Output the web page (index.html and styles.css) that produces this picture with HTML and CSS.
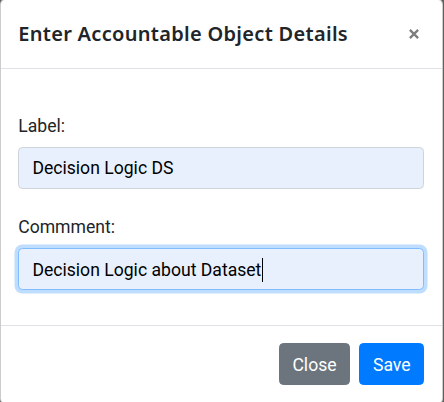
FILE: index.html
```html
<!DOCTYPE html>
<html lang="en">
<head>
<meta charset="utf-8">
<title>Enter Accountable Object Details</title>
<link rel="stylesheet" href="styles.css">
</head>
<body>
<div class="modal">
  <div class="modal-header">
    <h5 class="modal-title">Enter Accountable Object Details</h5>
    <button class="close" type="button" aria-label="Close">
      <svg width="10" height="10" viewBox="0 0 10 10" aria-hidden="true"><path d="M0.9 0.9L9.1 9.1M9.1 0.9L0.9 9.1" stroke="#7d7d7d" stroke-width="2.3"/></svg>
    </button>
  </div>
  <div class="modal-body">
    <div class="form-group">
      <label class="form-label">Label:</label>
      <div class="field">Decision Logic DS</div>
    </div>
    <div class="form-group">
      <label class="form-label">Commment:</label>
      <div class="field focused">Decision Logic about Dataset<span class="caret"></span></div>
    </div>
  </div>
  <div class="modal-footer">
    <button class="btn btn-secondary" type="button">Close</button>
    <button class="btn btn-primary" type="button">Save</button>
  </div>
</div>
</body>
</html>
```

FILE: styles.css
```css
html, body {
  margin: 0;
  padding: 0;
}
body {
  background: #5e625f;
  width: 444px;
  height: 402px;
  overflow: hidden;
  font-family: "Segoe UI", Roboto, "Noto Sans", sans-serif;
  color: #212529;
}
.modal {
  width: 443.4px;
  margin: -1px 0 0 -0.4px;
  box-sizing: border-box;
  background: #fff;
  border: 1.1px solid rgba(0, 0, 0, 0.2);
  border-radius: 5.3px;
}
.modal-header {
  display: flex;
  justify-content: space-between;
  align-items: flex-start;
  padding: 17.6px 17.6px 19.5px;
  border-bottom: 1.1px solid #dee2e6;
}
.modal-title {
  margin: 0;
  font-family: "Segoe UI", "Noto Sans", sans-serif;
  font-size: 20px;
  line-height: 31px;
  font-weight: 600;
  letter-spacing: 0.3px;
}
.close {
  border: 0;
  background: transparent;
  padding: 0;
  margin: 11px 5px 0 0;
  width: 10px;
  height: 10px;
  display: flex;
}
.modal-body {
  padding: 42.5px 17.6px 35px;
  display: flex;
  flex-direction: column;
  gap: 24.3px;
}
.form-group {
  display: flex;
  flex-direction: column;
}
.form-label {
  font-size: 17.6px;
  line-height: 26.4px;
  padding-top: 1.3px;
  margin-bottom: 7.5px;
}
.field {
  height: 41.8px;
  box-sizing: border-box;
  padding: 7.6px 13.2px 5.6px;
  font-size: 17.6px;
  line-height: 26.4px;
  background: #e8f0fe;
  border: 1.1px solid #ced4da;
  border-radius: 4.4px;
  color: #000;
  display: flex;
  align-items: center;
}
.field.focused {
  border-color: #80bdff;
  box-shadow: 0 0 0 3.5px rgba(0, 123, 255, 0.25);
}
.caret {
  display: inline-block;
  width: 1px;
  height: 24px;
  background: #000;
  margin-left: 1px;
}
.modal-footer {
  display: flex;
  justify-content: flex-end;
  padding: 13.2px;
  border-top: 1.1px solid #dee2e6;
}
.btn {
  margin: 4.4px;
  font-family: inherit;
  font-size: 17.6px;
  line-height: 26.4px;
  padding: 7.6px 12.8px 5.6px;
  border: 1.1px solid transparent;
  border-radius: 4.4px;
  color: #fff;
}
.btn-secondary {
  background: #6c757d;
  border-color: #6c757d;
}
.btn-primary {
  background: #007bff;
  border-color: #007bff;
}
```
